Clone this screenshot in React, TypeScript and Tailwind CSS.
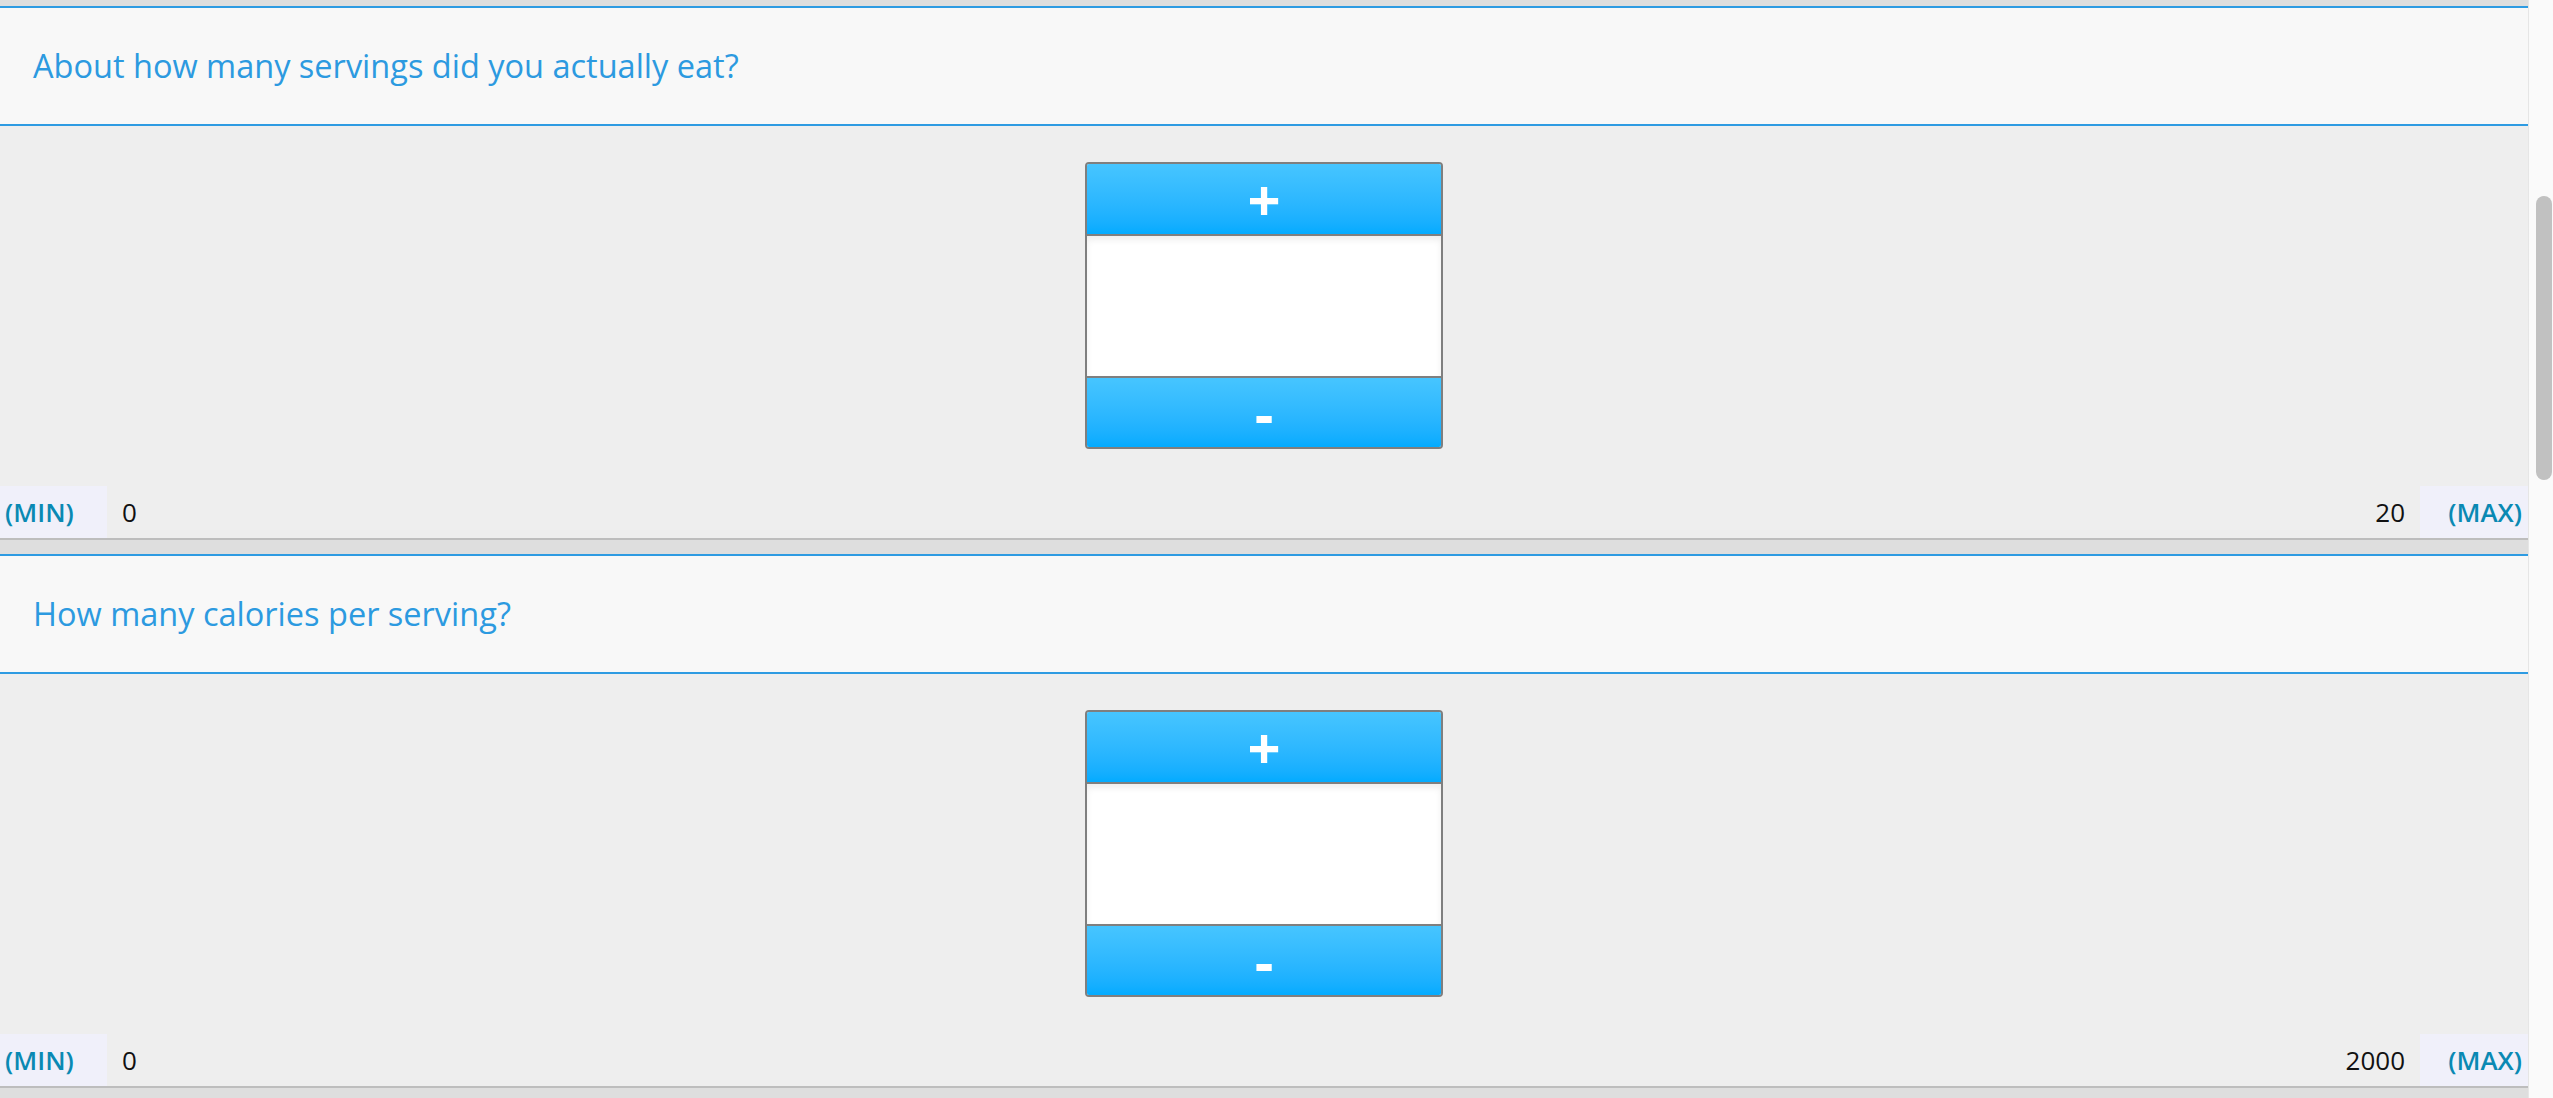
import React from 'react';

const FONT = "font-['Open_Sans',_'Liberation_Sans',_sans-serif]";

type Question = {
  id: string;
  label: string;
  min: number;
  max: number;
};

const QUESTIONS: Question[] = [
  { id: 'servings', label: 'About how many servings did you actually eat?', min: 0, max: 20 },
  { id: 'calories', label: 'How many calories per serving?', min: 0, max: 2000 },
];

function Stepper() {
  return (
    <div className="w-[358px] rounded-[4px] border-2 border-[#7f7f7f] overflow-hidden flex flex-col">
      <button className="h-[70px] bg-gradient-to-b from-[#46c5ff] to-[#02abff] text-white font-bold text-[58px] leading-[70px] flex items-center justify-center">
        +
      </button>
      <div className="h-[144px] bg-white border-y-2 border-[#7f7f7f] shadow-[inset_0_4px_6px_rgba(0,0,0,0.07)]" />
      <button className="h-[69px] bg-gradient-to-b from-[#46c5ff] to-[#02abff] text-white font-bold text-[58px] leading-[69px] flex items-center justify-center">
        -
      </button>
    </div>
  );
}

function QuestionBlock({ q }: { q: Question }) {
  return (
    <section>
      {/* Question header */}
      <div className="h-[120px] bg-[#f8f8f8] border-y-2 border-[#2e9be2] flex items-center pl-[33px]">
        <h2 className="text-[32.5px] text-[#2c9ae0]">{q.label}</h2>
      </div>

      {/* Stepper + range */}
      <div className="bg-[#eeeeee] pt-[36px] flex flex-col items-center">
        <Stepper />
        <div className="mt-[37px] w-full h-[54px] border-b-2 border-[#bdbdbd] flex items-stretch text-[26px]">
          <div className="w-[107px] bg-[#f0f0fa] pl-[5px] flex items-center font-semibold text-[#0a89b3]">(MIN)</div>
          <div className="px-[15px] flex items-center text-[#111]">{q.min}</div>
          <div className="flex-1" />
          <div className="px-[15px] flex items-center text-[#111]">{q.max}</div>
          <div className="w-[108px] bg-[#f0f0fa] pr-[6px] flex items-center justify-end font-semibold text-[#0a89b3]">(MAX)</div>
        </div>
      </div>
    </section>
  );
}

export default function App() {
  return (
    <div className={`h-[1098px] w-full flex overflow-hidden bg-[#dedede] ${FONT}`}>
      <main className="flex-1 flex flex-col">
        <div className="h-[6px] shrink-0" />
        {QUESTIONS.map((q, i) => (
          <div key={q.id} className={i > 0 ? 'mt-[14px]' : ''}>
            <QuestionBlock q={q} />
          </div>
        ))}
      </main>

      {/* Scrollbar */}
      <div className="w-[25px] shrink-0 bg-[#fafafa] border-l border-[#e6e6e6] pt-[196px] pl-[7px]">
        <div className="w-[16px] h-[284px] rounded-full bg-[#c1c1c1]" />
      </div>
    </div>
  );
}
